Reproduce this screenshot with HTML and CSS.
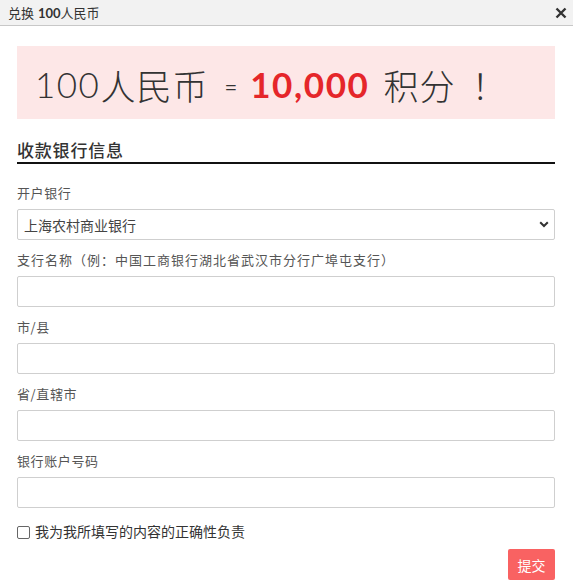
FILE: index.html
```html
<!DOCTYPE html>
<html lang="zh-CN">
<head>
<meta charset="utf-8">
<title>兑换 100人民币</title>
<link rel="stylesheet" href="styles.css">
</head>
<body>
<div class="dialog">
  <div class="dialog-header">
    <div class="dialog-title">兑换 <b>100</b>人民币</div>
    <button class="close" aria-label="关闭">
      <svg width="12" height="12" viewBox="0 0 12 12"><path d="M1.5 1.5 L10.5 10.5 M10.5 1.5 L1.5 10.5" stroke="#333" stroke-width="2.4" stroke-linecap="butt" fill="none"/></svg>
    </button>
  </div>
  <div class="dialog-body">
    <div class="banner">
      <span class="b-num">100</span><span class="b-cjk">人民币</span><span class="b-eq">=</span><span class="b-red">10,000</span><span class="b-cjk b-points">积分</span><span class="b-excl">！</span>
    </div>
    <h3 class="section-title">收款银行信息</h3>
    <div class="field">
      <label class="field-label">开户银行</label>
      <div class="select-wrap">
        <select class="control select">
          <option>上海农村商业银行</option>
        </select>
        <svg class="chevron" width="10" height="7" viewBox="0 0 10 7"><path d="M1.2 1.2 L5 5 L8.8 1.2" stroke="#333" stroke-width="2" fill="none"/></svg>
      </div>
    </div>
    <div class="field">
      <label class="field-label long">支行名称（例：中国工商银行湖北省武汉市分行广埠屯支行）</label>
      <input class="control" type="text">
    </div>
    <div class="field">
      <label class="field-label">市/县</label>
      <input class="control" type="text">
    </div>
    <div class="field">
      <label class="field-label">省/直辖市</label>
      <input class="control" type="text">
    </div>
    <div class="field">
      <label class="field-label">银行账户号码</label>
      <input class="control" type="text">
    </div>
    <label class="check-row">
      <span class="checkbox"></span>
      <span class="check-text">我为我所填写的内容的正确性负责</span>
    </label>
    <div class="actions">
      <button class="submit">提交</button>
    </div>
  </div>
</div>
</body>
</html>
```

FILE: styles.css
```css
html, body {
  margin: 0;
  padding: 0;
  background: #fff;
}
body {
  font-family: "Lato", "Noto Sans CJK SC", sans-serif;
  color: #333;
}
.dialog {
  width: 573px;
  height: 582px;
  overflow: hidden;
}
.dialog-header {
  height: 25px;
  background: #f2f2f2;
  border-bottom: 1px solid #c8c8c8;
  display: flex;
  align-items: center;
  justify-content: space-between;
  padding: 0 5px 0 8px;
}
.dialog-title {
  font-size: 13px;
  color: #333;
  font-family: "Noto Sans CJK SC", sans-serif;
}
.dialog-title b {
  font-family: "Lato", sans-serif;
  font-weight: 700;
  margin-left: 1px;
}
.close {
  border: 0;
  background: transparent;
  padding: 0;
  width: 14px;
  height: 14px;
  display: flex;
  align-items: center;
  justify-content: center;
}
.dialog-body {
  padding: 0 18px 0 17px;
}
.banner {
  margin-top: 20px;
  height: 73px;
  background: #fde7e7;
  display: flex;
  align-items: center;
  padding-left: 18px;
  padding-top: 3px;
  box-sizing: border-box;
  color: #333;
}
.b-num {
  font-family: "Lato", sans-serif;
  font-weight: 300;
  font-size: 35px;
  letter-spacing: 1.5px;
}
.b-cjk {
  font-family: "Noto Sans CJK SC", sans-serif;
  font-weight: 300;
  font-size: 35px;
  letter-spacing: 1px;
}
.b-eq {
  font-family: "Lato", sans-serif;
  font-size: 22px;
  margin: 4px 13px 0 16px;
}
.b-red {
  font-family: "Lato", sans-serif;
  font-weight: 700;
  font-size: 35px;
  color: #e5262a;
  letter-spacing: 1.6px;
}
.b-points {
  margin-left: 14px;
}
.b-excl {
  font-family: "Noto Sans CJK SC", sans-serif;
  font-weight: 300;
  font-size: 35px;
  margin-left: 16px;
}
.section-title {
  margin: 19px 0 0;
  font-family: "Noto Sans CJK SC", sans-serif;
  font-weight: 500;
  font-size: 17px;
  line-height: 24px;
  color: #333;
  border-bottom: 2px solid #111;
  letter-spacing: 0.8px;
}
.field {
  margin-top: 19px;
}
.field + .field {
  margin-top: 10px;
}
.field-label {
  display: block;
  font-family: "Noto Sans CJK SC", sans-serif;
  font-size: 13px;
  line-height: 20px;
  color: #555;
  margin-bottom: 6px;
  letter-spacing: 0.6px;
}
.field-label.long {
  letter-spacing: 1px;
}
.control {
  display: block;
  box-sizing: border-box;
  width: 100%;
  height: 31px;
  border: 1px solid #cfcfcf;
  border-radius: 2px;
  background: #fff;
  margin: 0;
  padding: 0 6px;
  font-family: "Noto Sans CJK SC", sans-serif;
  font-size: 14px;
  color: #444;
  outline: none;
}
.select-wrap {
  position: relative;
}
.select {
  appearance: none;
  -webkit-appearance: none;
  padding-left: 6px;
}
.chevron {
  position: absolute;
  right: 6px;
  top: 12px;
  pointer-events: none;
}
.check-row {
  display: flex;
  align-items: center;
  margin-top: 13px;
  height: 20px;
}
.checkbox {
  width: 11px;
  height: 11px;
  border: 1px solid #666;
  border-radius: 2px;
  background: #fff;
  box-sizing: content-box;
  margin-top: 2px;
}
.check-text {
  margin-left: 5px;
  font-family: "Noto Sans CJK SC", sans-serif;
  font-size: 14px;
  color: #333;
}
.actions {
  display: flex;
  justify-content: flex-end;
  margin-top: 8px;
}
.submit {
  width: 47px;
  height: 31px;
  border: 0;
  border-radius: 2px;
  background: #f96262;
  color: #fff;
  font-family: "Noto Sans CJK SC", sans-serif;
  font-size: 14px;
  padding: 0;
}
```
